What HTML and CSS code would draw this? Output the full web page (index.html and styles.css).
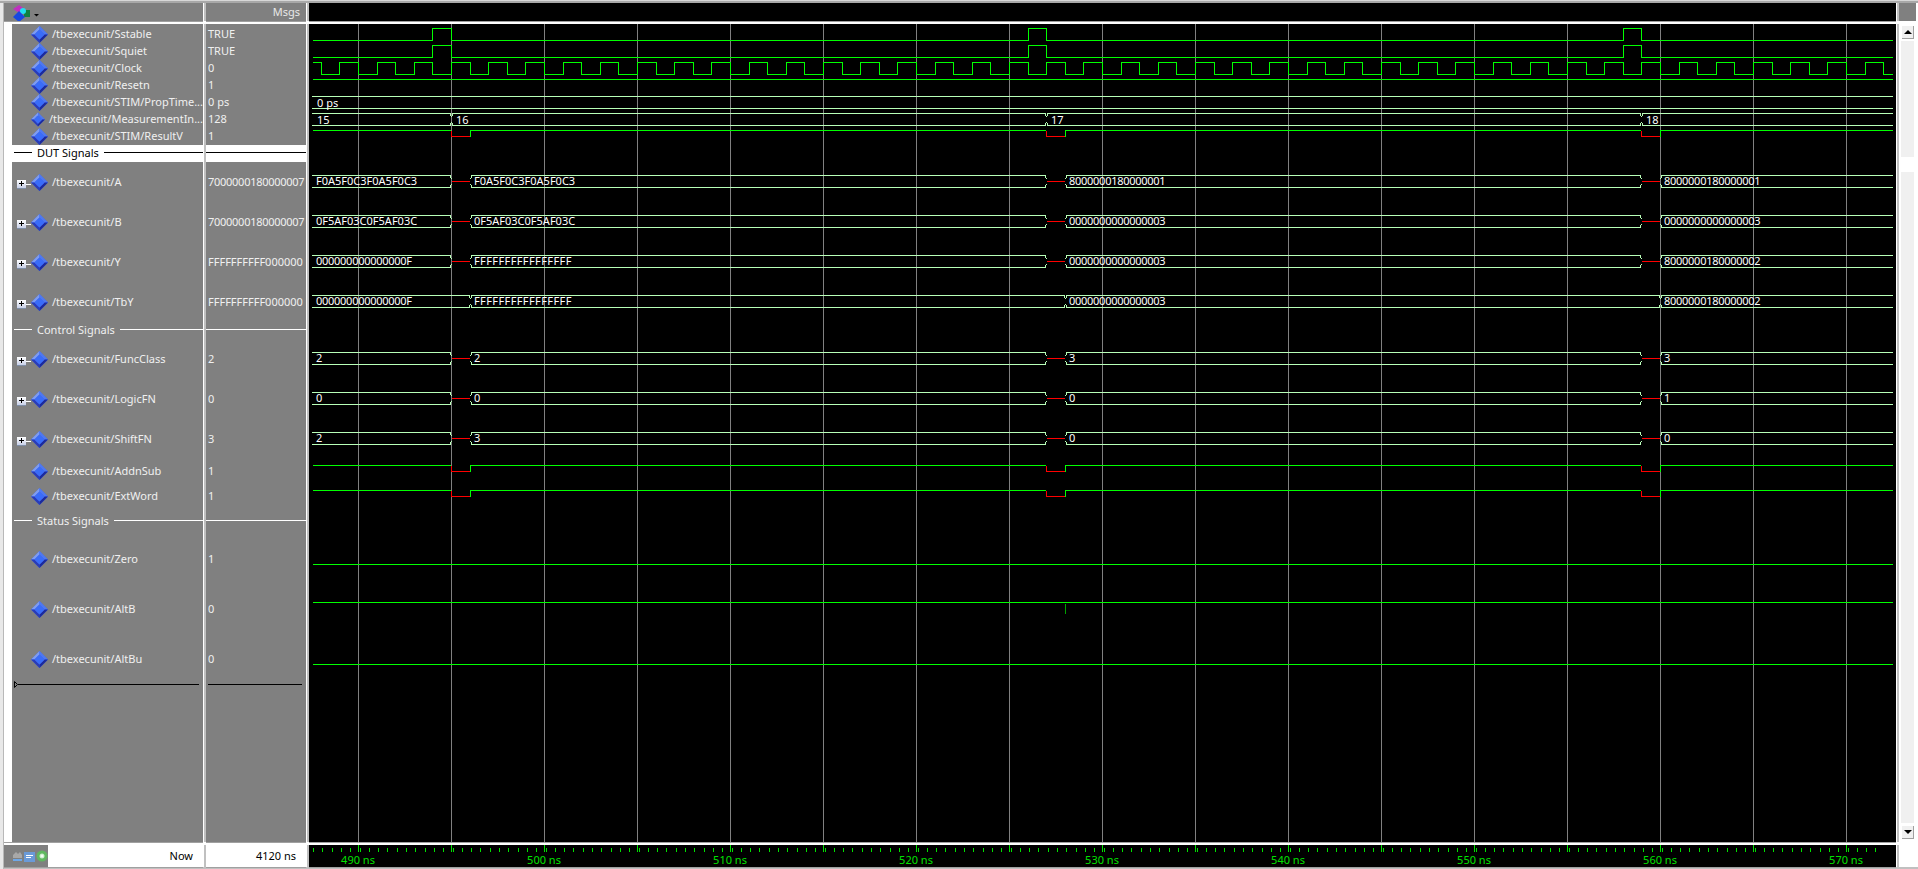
FILE: index.html
```html
<!DOCTYPE html>
<html>
	<head>
		<meta charset="utf-8">
		<title>Wave</title>
		<link rel="stylesheet" href="styles.css">
	</head>
	<body>
		<svg class="defs" width="0" height="0">
			<symbol id="dia" viewBox="0 0 15 15">
				<polygon points="7.5,0 15,7.5 7.5,15 0,7.5" fill="#3f66e8"/>
				<polygon points="7.5,0 7.5,3 3,7.5 0,7.5" fill="#7f9cf0"/>
				<polygon points="7.5,0 15,7.5 12,7.5 7.5,3" fill="#4f78f0"/>
				<polygon points="0,7.5 3,7.5 7.5,12 7.5,15" fill="#2a3cb8"/>
				<polygon points="15,7.5 12,7.5 7.5,12 7.5,15" fill="#1c2a9c"/>
				<polygon points="7.5,3 12,7.5 7.5,12 3,7.5" fill="#3a6cf8"/>
			</symbol>
		</svg>
		<div class="window">
			<!-- header row -->
			<div class="head names-head">
				<svg class="logo" width="36" height="18" viewBox="0 0 36 18">
					<polygon points="0,6 6,2 13,7 8,11" fill="#c030c0"/>
					<rect x="11" y="7" width="6" height="7" fill="#108040"/>
					<circle cx="10" cy="8" r="3" fill="#20e0f0"/>
					<polygon points="6,8 12,14 6,19 0,14" fill="#1848e0"/>
					<polygon points="21,11 26,11 23.5,13.5" fill="#000"/>
				</svg>
			</div>
			<div class="head msgs-head">Msgs</div>
			<div class="head wave-head"></div>
			<div class="head bar-cap"></div>

			<!-- signal names -->
			<div class="pane names">
				<div class="list">
					<div class="row r17"><svg class="dia"><use href="#dia"/></svg><span>/tbexecunit/Sstable</span></div>
					<div class="row r17"><svg class="dia"><use href="#dia"/></svg><span>/tbexecunit/Squiet</span></div>
					<div class="row r17"><svg class="dia"><use href="#dia"/></svg><span>/tbexecunit/Clock</span></div>
					<div class="row r17"><svg class="dia"><use href="#dia"/></svg><span>/tbexecunit/Resetn</span></div>
					<div class="row r17"><svg class="dia"><use href="#dia"/></svg><span>/tbexecunit/STIM/PropTime...</span></div>
					<div class="row r17"><svg class="dia"><use href="#dia"/></svg><span>/tbexecunit/MeasurementIn...</span></div>
					<div class="row r17"><svg class="dia"><use href="#dia"/></svg><span>/tbexecunit/STIM/ResultV</span></div>
					<div class="sep r17 picked"><i></i><span>DUT Signals</span><i></i></div>
					<div class="row r40 group"><b class="plus"></b><b class="stem"></b><svg class="dia"><use href="#dia"/></svg><span>/tbexecunit/A</span></div>
					<div class="row r40 group"><b class="plus"></b><b class="stem"></b><svg class="dia"><use href="#dia"/></svg><span>/tbexecunit/B</span></div>
					<div class="row r40 group"><b class="plus"></b><b class="stem"></b><svg class="dia"><use href="#dia"/></svg><span>/tbexecunit/Y</span></div>
					<div class="row r40 group"><b class="plus"></b><b class="stem"></b><svg class="dia"><use href="#dia"/></svg><span>/tbexecunit/TbY</span></div>
					<div class="sep r17"><i></i><span>Control Signals</span><i></i></div>
					<div class="row r40 group"><b class="plus"></b><b class="stem"></b><svg class="dia"><use href="#dia"/></svg><span>/tbexecunit/FuncClass</span></div>
					<div class="row r40 group"><b class="plus"></b><b class="stem"></b><svg class="dia"><use href="#dia"/></svg><span>/tbexecunit/LogicFN</span></div>
					<div class="row r40 group"><b class="plus"></b><b class="stem"></b><svg class="dia"><use href="#dia"/></svg><span>/tbexecunit/ShiftFN</span></div>
					<div class="row r25"><svg class="dia"><use href="#dia"/></svg><span>/tbexecunit/AddnSub</span></div>
					<div class="row r25"><svg class="dia"><use href="#dia"/></svg><span>/tbexecunit/ExtWord</span></div>
					<div class="sep r25"><i></i><span>Status Signals</span><i></i></div>
					<div class="row r50"><svg class="dia"><use href="#dia"/></svg><span>/tbexecunit/Zero</span></div>
					<div class="row r50"><svg class="dia"><use href="#dia"/></svg><span>/tbexecunit/AltB</span></div>
					<div class="row r50"><svg class="dia"><use href="#dia"/></svg><span>/tbexecunit/AltBu</span></div>
					<div class="marker">
						<svg width="4" height="7" viewBox="0 0 4 7"><polygon points="0.5,0.5 3.5,3.5 0.5,6.5" fill="none" stroke="#000"/></svg>
						<i></i>
					</div>
				</div>
			</div>

			<!-- current values -->
			<div class="pane vals">
				<div class="list">
					<div class="row r17">TRUE</div>
					<div class="row r17">TRUE</div>
					<div class="row r17">0</div>
					<div class="row r17">1</div>
					<div class="row r17">0 ps</div>
					<div class="row r17">128</div>
					<div class="row r17">1</div>
					<div class="sep r17 picked"><i></i></div>
					<div class="row r40 num">7000000180000007</div>
					<div class="row r40 num">7000000180000007</div>
					<div class="row r40">FFFFFFFFFF000000</div>
					<div class="row r40">FFFFFFFFFF000000</div>
					<div class="sep r17"><i></i></div>
					<div class="row r40">2</div>
					<div class="row r40">0</div>
					<div class="row r40">3</div>
					<div class="row r25">1</div>
					<div class="row r25">1</div>
					<div class="sep r25"><i></i></div>
					<div class="row r50">1</div>
					<div class="row r50">0</div>
					<div class="row r50">0</div>
					<div class="marker"><i></i></div>
				</div>
			</div>

			<!-- waveforms, viewBox uses window coordinates -->
			<div class="pane waves">
				<svg class="wave-svg" width="1587" height="818" viewBox="309 24 1587 818">
					<defs>
						<g id="pulse">
							<path class="sig" d="M313 12.5H432.5V.5H451.5V12.5H1028.5V.5H1046.5V12.5H1623.5V.5H1641.5V12.5H1893"/>
						</g>
						<g id="dip">
							<path class="sig" d="M313 .5H451M470.5 6.5V.5H1046M1065.5 6.5V.5H1641M1660.5 6.5V.5H1893"/>
							<path class="bad" d="M451.5 .5V6.5H470M1046.5 .5V6.5H1065M1641.5 .5V6.5H1660"/>
						</g>
						<g id="bus-gap">
							<path class="bus" d="M312 .5H450L451.5 4M312 12.5H450L451.5 9M470.5 4L472 .5H1045L1046.5 4M470.5 9L472 12.5H1045L1046.5 9M1065.5 4L1067 .5H1640L1641.5 4M1065.5 9L1067 12.5H1640L1641.5 9M1660.5 4L1662 .5H1893M1660.5 9L1662 12.5H1893"/>
							<path class="bad" d="M452 6.5H470M1047 6.5H1065M1642 6.5H1660"/>
						</g>
					</defs>

					<path class="grid" d="M358.5 24V842M451.5 24V842M544.5 24V842M637.5 24V842M730.5 24V842M823.5 24V842M916.5 24V842M1009.5 24V842M1102.5 24V842M1195.5 24V842M1288.5 24V842M1381.5 24V842M1474.5 24V842M1567.5 24V842M1660.5 24V842M1753.5 24V842M1846.5 24V842"/>

					<use href="#pulse" y="28"/>
					<use href="#pulse" y="45"/>
					<path class="sig" d="M313 62.5H321.5v12H339.5v-12H358.5v12H377.5v-12H395.5v12H414.5v-12H432.5v12H451.5v-12H470.5v12H488.5v-12H507.5v12H525.5v-12H544.5v12H563.5v-12H581.5v12H600.5v-12H618.5v12H637.5v-12H656.5v12H674.5v-12H693.5v12H711.5v-12H730.5v12H749.5v-12H767.5v12H786.5v-12H804.5v12H823.5v-12H842.5v12H860.5v-12H879.5v12H897.5v-12H916.5v12H935.5v-12H953.5v12H972.5v-12H990.5v12H1009.5v-12H1028.5v12H1046.5v-12H1065.5v12H1083.5v-12H1102.5v12H1121.5v-12H1139.5v12H1158.5v-12H1176.5v12H1195.5v-12H1214.5v12H1232.5v-12H1251.5v12H1269.5v-12H1288.5v12H1307.5v-12H1325.5v12H1344.5v-12H1362.5v12H1381.5v-12H1400.5v12H1418.5v-12H1437.5v12H1455.5v-12H1474.5v12H1493.5v-12H1511.5v12H1530.5v-12H1548.5v12H1567.5v-12H1586.5v12H1604.5v-12H1623.5v12H1641.5v-12H1660.5v12H1679.5v-12H1697.5v12H1716.5v-12H1734.5v12H1753.5v-12H1772.5v12H1790.5v-12H1809.5v12H1827.5v-12H1846.5v12H1865.5v-12H1883.5v12H1893"/>
					<path class="sig" d="M313 79.5H1893"/>

					<path class="bus" d="M312 96.5H1893M312 108.5H1893"/>
					<text x="317" y="107">0 ps</text>

					<path class="bus" d="M312 113.5H450L451.5 117M312 125.5H450L451.5 122M451.5 117L453 113.5H1045L1046.5 117M451.5 122L453 125.5H1045L1046.5 122M1046.5 117L1048 113.5H1640L1641.5 117M1046.5 122L1048 125.5H1640L1641.5 122M1641.5 117L1643 113.5H1893M1641.5 122L1643 125.5H1893"/>
					<text x="317" y="124">15</text>
					<text x="456" y="124">16</text>
					<text x="1051" y="124">17</text>
					<text x="1646" y="124">18</text>

					<use href="#dip" y="130"/>

					<use href="#bus-gap" y="175"/>
					<text x="316" y="185">F0A5F0C3F0A5F0C3</text>
					<text x="474" y="185">F0A5F0C3F0A5F0C3</text>
					<text class="num" x="1069" y="185">8000000180000001</text>
					<text class="num" x="1664" y="185">8000000180000001</text>

					<use href="#bus-gap" y="215"/>
					<text x="316" y="225">0F5AF03C0F5AF03C</text>
					<text x="474" y="225">0F5AF03C0F5AF03C</text>
					<text class="num" x="1069" y="225">0000000000000003</text>
					<text class="num" x="1664" y="225">0000000000000003</text>

					<use href="#bus-gap" y="255"/>
					<text class="num" x="316" y="265">000000000000000F</text>
					<text class="fff" x="474" y="265">FFFFFFFFFFFFFFFF</text>
					<text class="num" x="1069" y="265">0000000000000003</text>
					<text class="num" x="1664" y="265">8000000180000002</text>

					<path class="bus" d="M312 295.5H469L470.5 299M312 307.5H469L470.5 304M470.5 299L472 295.5H1064L1065.5 299M470.5 304L472 307.5H1064L1065.5 304M1065.5 299L1067 295.5H1659L1660.5 299M1065.5 304L1067 307.5H1659L1660.5 304M1660.5 299L1662 295.5H1893M1660.5 304L1662 307.5H1893"/>
					<text class="num" x="316" y="305">000000000000000F</text>
					<text class="fff" x="474" y="305">FFFFFFFFFFFFFFFF</text>
					<text class="num" x="1069" y="305">0000000000000003</text>
					<text class="num" x="1664" y="305">8000000180000002</text>

					<use href="#bus-gap" y="352"/>
					<text x="316" y="362">2</text>
					<text x="474" y="362">2</text>
					<text x="1069" y="362">3</text>
					<text x="1664" y="362">3</text>

					<use href="#bus-gap" y="392"/>
					<text x="316" y="402">0</text>
					<text x="474" y="402">0</text>
					<text x="1069" y="402">0</text>
					<text x="1664" y="402">1</text>

					<use href="#bus-gap" y="432"/>
					<text x="316" y="442">2</text>
					<text x="474" y="442">3</text>
					<text x="1069" y="442">0</text>
					<text x="1664" y="442">0</text>

					<use href="#dip" y="465"/>
					<use href="#dip" y="490"/>

					<path class="sig" d="M313 564.5H1893M313 602.5H1893M313 664.5H1893"/>
					<path class="tick" d="M1065.5 604V614"/>
				</svg>
			</div>

			<!-- scrollbar -->
			<div class="pane bar">
				<div class="arrow up"></div>
				<div class="track"><div class="thumb"></div></div>
				<div class="arrow down"></div>
			</div>

			<!-- footer row -->
			<div class="foot names-foot">
				<svg class="tools" width="44" height="22" viewBox="0 0 44 22">
					<path d="M9 13V10L12 7L14 9L16 7L18 10V13Z" fill="#a8a8a8"/>
					<path d="M9 14H18V16H9Z" fill="#6fa8e8"/>
					<rect x="20" y="7" width="11" height="10" fill="#6a9ad8"/>
					<rect x="22" y="10" width="7" height="1" fill="#fff"/>
					<rect x="22" y="12" width="5" height="1" fill="#fff"/>
					<circle cx="38" cy="11" r="5.5" fill="#60b860"/>
					<circle cx="38" cy="11" r="2.5" fill="#c8ecc8"/>
					<path d="M36.5 11H39.5M38 9.5V12.5" stroke="#fff"/>
				</svg>
				<span class="now">Now</span>
			</div>
			<div class="foot vals-foot">4120 ns</div>
			<div class="foot ruler">
				<svg width="1587" height="22" viewBox="309 845 1587 22">
					<path class="minor" d="M313 850H1885"/>
					<path class="major" d="M358.5 845V852M451.5 845V852M544.5 845V852M637.5 845V852M730.5 845V852M823.5 845V852M916.5 845V852M1009.5 845V852M1102.5 845V852M1195.5 845V852M1288.5 845V852M1381.5 845V852M1474.5 845V852M1567.5 845V852M1660.5 845V852M1753.5 845V852M1846.5 845V852"/>
					<text x="358" y="864">490 ns</text>
					<text x="544" y="864">500 ns</text>
					<text x="730" y="864">510 ns</text>
					<text x="916" y="864">520 ns</text>
					<text x="1102" y="864">530 ns</text>
					<text x="1288" y="864">540 ns</text>
					<text x="1474" y="864">550 ns</text>
					<text x="1660" y="864">560 ns</text>
					<text x="1846" y="864">570 ns</text>
				</svg>
			</div>
			<div class="foot bar-cap"></div>
		</div>
	</body>
</html>
```

FILE: styles.css
```css
html, body {
	margin: 0;
	padding: 0;
	overflow: hidden;
	background: #fff;
}
body {
	font: 11px/1 "Noto Sans", "Liberation Sans", sans-serif;
}
.defs {
	position: absolute;
}
.window {
	display: grid;
	grid-template-columns: 199px 100px 1587px 17px;
	grid-template-rows: 18px 818px 22px;
	gap: 3px;
	width: 1918px;
	height: 869px;
	box-sizing: border-box;
	padding: 3px 2px 2px 4px;
	background: #fff;
	box-shadow: inset 0 1px 0 #d8d8d8, inset 0 3px 0 #a8a8a8, inset 3px 0 0 #e8e8e8, inset 4px 0 0 #b8b8b8, inset 0 -2px 0 #c0c0c0;
}
.head, .pane, .foot {
	box-shadow: 1px 0 0 #fff, 3px 0 0 #c0c0c0, 0 1px 0 #a0a0a0;
}

/* header */
.head {
	background: #808080;
	color: #e8e8e8;
}
.wave-head {
	background: #000;
}
.names-head {
	display: flex;
}
.logo {
	margin-left: 9px;
}
.msgs-head {
	padding: 3px 6px 0 0;
	text-align: right;
}
.bar-cap {
	background: #808080;
	box-shadow: none;
}

/* signal lists */
.names {
	background: #fff;
	padding-left: 8px;
}
.list {
	height: 100%;
	padding-top: 2px;
	box-sizing: border-box;
	background: #808080;
	color: #f0f0f0;
}
.row {
	display: flex;
	align-items: center;
	box-sizing: border-box;
}
.row span {
	padding-bottom: 2px;
}
.r17 { height: 17px; }
.r25 { height: 25px; }
.r40 { height: 40px; }
.r50 { height: 50px; }
.names .row {
	padding-left: 19px;
}
.names .group {
	padding-left: 5px;
}
.dia {
	width: 17px;
	height: 17px;
	margin-right: 4px;
}
.plus {
	position: relative;
	width: 9px;
	height: 8px;
	margin-top: 4px;
	background: linear-gradient(#fff, #c8d0e8);
	box-shadow: 0 1px 0 #8090a8;
}
.plus::before {
	content: "";
	position: absolute;
	left: 2px;
	top: 3px;
	width: 5px;
	height: 1px;
	background: #000;
}
.plus::after {
	content: "";
	position: absolute;
	left: 4px;
	top: 1px;
	width: 1px;
	height: 5px;
	background: #000;
}
.stem {
	width: 5px;
	height: 1px;
	margin-top: 4px;
	background: #fff;
}
.vals .row {
	padding: 0 0 2px 2px;
}
.vals .num {
	letter-spacing: -.27px;
}

/* separators */
.sep {
	display: flex;
	align-items: center;
	box-sizing: border-box;
	padding-bottom: 2px;
}
.sep i {
	display: block;
	height: 1px;
	flex: 1;
	background: #fff;
}
.names .sep {
	padding-left: 2px;
}
.sep i:first-child {
	flex: none;
	width: 18px;
}
.vals .sep i:first-child {
	flex: 1;
}
.sep span {
	margin: 0 5px;
}
.picked {
	background: #fff;
	color: #000;
}
.picked i {
	background: #000;
}

/* cursor marker */
.marker {
	display: flex;
	align-items: center;
	height: 7px;
	margin-top: -3px;
	padding: 0 4px 0 2px;
}
.marker i {
	display: block;
	flex: 1;
	height: 1px;
	background: #000;
}

/* waves */
.waves {
	background: #000;
	overflow: hidden;
}
.wave-svg, .ruler svg {
	display: block;
}
.wave-svg path, .ruler path {
	fill: none;
	shape-rendering: crispEdges;
}
.grid { stroke: #808080; }
.sig { stroke: #00ff00; }
.bus { stroke: #b8ffb8; }
.bad { stroke: #ff0000; }
.tick { stroke: #00a000; }
.wave-svg text {
	font-size: 11px;
	fill: #fff;
}
.wave-svg .num {
	letter-spacing: -.27px;
}
.wave-svg .fff {
	letter-spacing: .4px;
}

/* scrollbar */
.bar {
	background: #fff;
	padding: 1px 2px 3px;
	display: flex;
	flex-direction: column;
	box-shadow: none;
}
.arrow {
	position: relative;
	height: 14px;
	flex: none;
	background: #f0f0f0;
	box-shadow: inset 1px 1px 0 #fff, inset -1px -1px 0 #a0a0a0;
}
.arrow::after {
	content: "";
	position: absolute;
	left: 3px;
	top: 5px;
	border-left: 4px solid transparent;
	border-right: 4px solid transparent;
}
.up::after {
	border-bottom: 4px solid #000;
}
.down::after {
	border-top: 4px solid #000;
}
.track {
	flex: 1;
	margin: 2px 0;
	background: #f0f0f0;
}
.thumb {
	height: 15px;
	margin-top: 116px;
	background: #fff;
}

/* footer */
.foot {
	background: #fff;
	color: #000;
}
.names-foot {
	display: flex;
	align-items: center;
	justify-content: space-between;
}
.tools {
	background: #808080;
}
.now {
	padding: 0 10px 2px 0;
}
.vals-foot {
	padding: 5px 10px 0 0;
	text-align: right;
	box-sizing: border-box;
}
.ruler {
	background: #000;
}
.minor {
	stroke: #00e000;
	stroke-width: 4;
	stroke-dasharray: 1 8.3;
}
.major {
	stroke: #00e000;
}
.ruler text {
	font-size: 11px;
	fill: #00e000;
	text-anchor: middle;
}
```
